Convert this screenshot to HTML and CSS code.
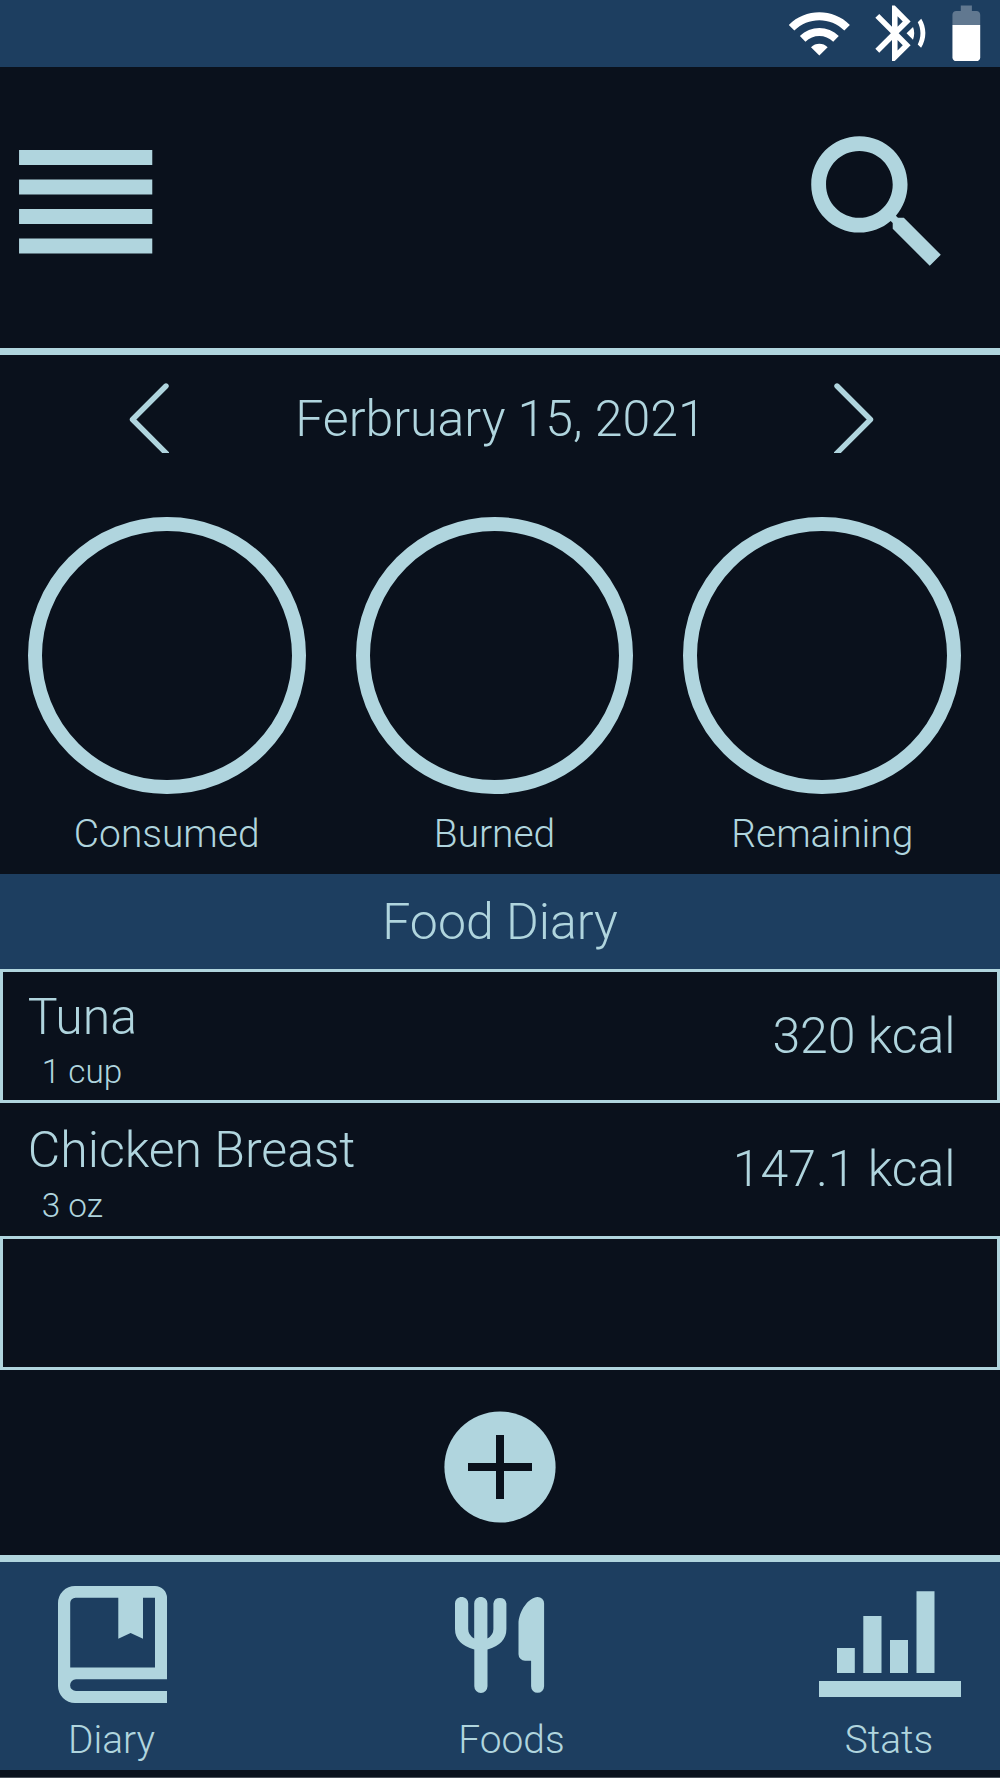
FILE: index.html
```html
<!DOCTYPE html>
<html lang="en">
<head>
<meta charset="utf-8">
<title>Food Diary</title>
<link rel="stylesheet" href="styles.css">
</head>
<body>
<div class="status-bar">
  <svg class="status-icon wifi" viewBox="0 0 24 24"><path d="M1 9l2 2c4.97-4.97 13.03-4.97 18 0l2-2C16.93 2.93 7.08 2.93 1 9zm8 8l3 3 3-3c-1.65-1.66-4.34-1.66-6 0zm-4-4l2 2c2.76-2.76 7.24-2.76 10 0l2-2C15.14 9.14 8.87 9.14 5 13z"/></svg>
  <svg class="status-icon" viewBox="0 0 24 24"><path d="M14.24 12.01l2.32 2.32c.28-.72.44-1.51.44-2.33 0-.82-.16-1.59-.43-2.31l-2.33 2.32zm5.29-5.3l-1.26 1.26c.63 1.21.98 2.57.98 4.02s-.36 2.82-.98 4.02l1.2 1.2c.97-1.54 1.54-3.36 1.54-5.31-.01-1.89-.55-3.67-1.48-5.19zm-3.82 1L10 2H9v7.59L4.41 5 3 6.41 8.59 12 3 17.59 4.41 19 9 14.41V22h1l5.71-5.71-4.3-4.29 4.3-4.29zM11 5.83l1.88 1.88L11 9.59V5.83zm1.88 10.46L11 18.17v-3.76l1.88 1.88z"/></svg>
  <svg class="status-icon" viewBox="0 0 24 24"><path fill-opacity=".3" d="M17 5.33C17 4.6 16.4 4 15.67 4H14V2h-4v2H8.33C7.6 4 7 4.6 7 5.33V9h10V5.33z"/><path d="M7 9v11.67C7 21.4 7.6 22 8.33 22h7.33c.74 0 1.34-.6 1.34-1.33V9H7z"/></svg>
</div>

<header class="app-header">
  <svg class="menu-icon" viewBox="0 0 48 37.4"><path d="M0 0h48v5.4H0zM0 10.6h48V16H0zM0 21.3h48v5.4H0zM0 31.9h48v5.4H0z"/></svg>
  <svg class="search-icon" viewBox="0 0 24 24"><path d="M15.5 14h-.79l-.28-.27C15.41 12.59 16 11.11 16 9.5 16 5.91 13.09 3 9.5 3S3 5.91 3 9.5 5.91 16 9.5 16c1.61 0 3.09-.59 4.23-1.57l.27.28v.79l5 4.99L20.49 19l-4.99-5zm-6 0C7.01 14 5 11.99 5 9.5S7.01 5 9.5 5 14 7.01 14 9.5 11.99 14 9.5 14z"/></svg>
</header>

<section class="date-row">
  <svg class="chevron" viewBox="0 0 40 70"><path d="M37 3 3.5 36.5 40 73"/></svg>
  <span class="date">Ferbruary 15, 2021</span>
  <svg class="chevron" viewBox="0 0 40 70"><path d="M3 3 36.5 36.5 0 73"/></svg>
</section>

<section class="summary">
  <div class="stat"><div class="ring"></div><div class="caption">Consumed</div></div>
  <div class="stat"><div class="ring"></div><div class="caption">Burned</div></div>
  <div class="stat"><div class="ring"></div><div class="caption">Remaining</div></div>
</section>

<h1 class="diary-title">Food Diary</h1>
<ul class="entries">
  <li class="entry boxed">
    <div class="item"><div class="food">Tuna</div><div class="portion">1 cup</div></div>
    <div class="kcal">320 kcal</div>
  </li>
  <li class="entry">
    <div class="item"><div class="food">Chicken Breast</div><div class="portion">3 oz</div></div>
    <div class="kcal">147.1 kcal</div>
  </li>
  <li class="entry boxed"></li>
</ul>

<div class="add-row">
  <svg class="add" viewBox="0 0 112 112"><circle cx="56" cy="56" r="55.6"/><path d="M24 56h64M56 24v64"/></svg>
</div>

<nav class="tabs">
  <a class="tab diary">
    <svg width="109" height="117" viewBox="0 0 109 117"><path fill-rule="evenodd" d="M17 0H97a12 12 0 0 1 12 12V93.3H18a5.9 5.9 0 0 0 0 11.8H109V117H17A17 17 0 0 1 0 100V17A17 17 0 0 1 17 0zM17.5 11.8a5.3 5.3 0 0 0-5.3 5.3V81.5H97V11.8H85V52.7L72.6 47 60.3 52.7V11.8z"/></svg>
    <span class="tab-label">Diary</span>
  </a>
  <a class="tab foods">
    <svg width="90" height="96" viewBox="0 0 90 96"><path d="M0 6.5a6.6 6.6 0 0 1 13.2 0V32q0 6 6 9.6V6.5a6.6 6.6 0 0 1 13.2 0V41.6q6-3.6 6-9.6V6.5a6.6 6.6 0 0 1 13 0V32q0 15-18.9 20.6V89.3a6.6 6.6 0 0 1-13.2 0V52.6Q0 47 0 32zM63.5 27C63.5 14 74 0 82.5 0a6.5 6.5 0 0 1 6.6 6.5V89.3a6.5 6.5 0 0 1-13 0V63.7H70a6.5 6.5 0 0 1-6.5-6.5z"/></svg>
    <span class="tab-label">Foods</span>
  </a>
  <a class="tab stats">
    <svg width="142" height="106" viewBox="0 0 142 106"><path d="M18 57h17.8v25H18zM44.3 25h18.2v57H44.3zM71 49h18v33H71zM97.5.2h18V82h-18zM0 90h142v16.3H0z"/></svg>
    <span class="tab-label">Stats</span>
  </a>
</nav>
</body>
</html>
```
FILE: styles.css
```css
* { box-sizing: border-box; }

body {
  margin: 0;
  width: 1000px;
  height: 1778px;
  display: flex;
  flex-direction: column;
  overflow: hidden;
  background: #0a111c;
  border-bottom: 1px solid #4b525b;
  color: #b0d5de;
  font-family: Roboto, "Liberation Sans", sans-serif;
  font-weight: 300;
  font-size: 50px;
}

svg { display: block; flex: none; fill: #b0d5de; }

.status-bar {
  flex: none;
  height: 67px;
  display: flex;
  justify-content: flex-end;
  background: #1d3e60;
}
.status-icon { width: 66.67px; height: 66.67px; fill: #fff; }
.wifi { margin-right: 13.9px; }

.app-header {
  flex: none;
  height: 288px;
  display: flex;
  justify-content: space-between;
  padding: 0 33.3px 0 19.4px;
  border-bottom: 7px solid #b0d5de;
}
.menu-icon { width: 133.33px; height: 103.8px; margin-top: 83px; }
.search-icon { width: 177.8px; height: 177.8px; margin-top: 46.9px; }

.date-row {
  flex: none;
  height: 128px;
  display: flex;
  align-items: center;
  justify-content: space-between;
  padding: 0 127px 0 129px;
}
.chevron {
  width: 40px;
  height: 70px;
  margin-bottom: 2px;
  overflow: hidden;
}
.chevron path {
  fill: none;
  stroke: #b0d5de;
  stroke-width: 5.4;
  stroke-linecap: round;
  stroke-linejoin: round;
}
.chevron:last-child { margin-right: -1px; }
.date { margin-right: 2px; line-height: 60px; }

.summary {
  flex: none;
  height: 391px;
  display: flex;
  gap: 50px;
  padding: 33.5px 0 0 27.8px;
}
.stat { width: 277.8px; text-align: center; }
.ring { height: 277.8px; border: 14px solid #b0d5de; border-radius: 50%; }
.caption { font-size: 38.89px; line-height: 80px; }

.diary-title {
  flex: none;
  margin: 0;
  height: 95px;
  padding-top: 1px;
  background: #1d3e60;
  font-size: 50px;
  font-weight: 300;
  line-height: 95px;
  text-align: center;
}

.entries { flex: none; margin: 0; padding: 0; list-style: none; }
.entry {
  height: 133px;
  display: flex;
  align-items: flex-start;
  justify-content: space-between;
  padding: 0 44.4px 0 27.8px;
}
.boxed { height: 134px; border: 3px solid #b0d5de; padding: 0 41.4px 0 24.8px; }
.item { padding-top: 17px; }
.boxed .item { padding-top: 15px; }
.food { line-height: 60px; }
.portion { padding-left: 13.9px; font-size: 33.33px; line-height: 52px; }
.boxed .portion { line-height: 50px; }
.kcal { padding-top: 36px; line-height: 60px; }
.boxed .kcal { padding-top: 34px; }

.add-row {
  flex: none;
  height: 185px;
  padding-top: 40.7px;
  display: flex;
  justify-content: center;
}
.add { width: 112px; height: 112px; }
.add path { stroke: #0a111c; stroke-width: 8; }

.tabs {
  flex: none;
  height: 215px;
  display: flex;
  align-items: flex-end;
  justify-content: space-between;
  padding: 0 39px 0 58px;
  border-top: 7px solid #b0d5de;
  background: #1d3e60;
}
.tab { display: flex; flex-direction: column; align-items: center; }
.tab-label { font-size: 38.89px; line-height: 60px; }
.diary .tab-label, .stats .tab-label { padding-right: 2px; }
.diary svg { margin-bottom: 7px; }
.foods { margin-left: 37px; }
.foods svg { margin: 0 24px 17px 0; }
.stats svg { margin-bottom: 13px; }
```
